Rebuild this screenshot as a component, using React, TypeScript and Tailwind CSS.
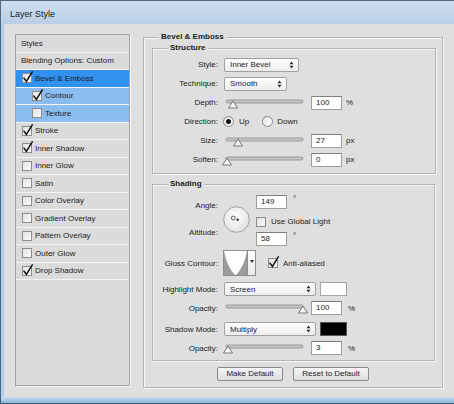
import type { ReactNode } from 'react';

const styleRows = [
  { label: 'Bevel & Emboss', checked: true, tone: 'active' },
  { label: 'Contour', checked: true, tone: 'sub', indent: true },
  { label: 'Texture', checked: false, tone: 'sub', indent: true },
  { label: 'Stroke', checked: true },
  { label: 'Inner Shadow', checked: true },
  { label: 'Inner Glow', checked: false },
  { label: 'Satin', checked: false },
  { label: 'Color Overlay', checked: false },
  { label: 'Gradient Overlay', checked: false },
  { label: 'Pattern Overlay', checked: false },
  { label: 'Outer Glow', checked: false },
  { label: 'Drop Shadow', checked: true },
];

function Check({ checked }: { checked: boolean }) {
  return (
    <span className="relative w-[10px] h-[10px] shrink-0 border border-[#8c8c8c] bg-linear-to-br from-[#e2e2e2] to-[#fbfbfb]">
      {checked && (
        <svg className="absolute -left-px -top-px overflow-visible" width="10" height="10" viewBox="0 0 10 10">
          <path d="M1.6 4.6 L4.4 8.4 L10.6 -1.6" fill="none" stroke="#111" strokeWidth="1.5" />
        </svg>
      )}
    </span>
  );
}

function Radio({ on }: { on?: boolean }) {
  return (
    <span className="w-[11px] h-[11px] shrink-0 rounded-full border border-[#868686] bg-linear-to-br from-[#e4e4e4] to-white flex items-center justify-center">
      {on && <span className="w-[5px] h-[5px] rounded-full bg-[#111]" />}
    </span>
  );
}

function Arrows() {
  return (
    <svg width="5" height="8" viewBox="0 0 5 8">
      <path d="M2.5 0.5 L4.6 3.2 H0.4 Z M2.5 7.5 L4.6 4.8 H0.4 Z" fill="#333" />
    </svg>
  );
}

function Select({ value, className }: { value: string; className: string }) {
  return (
    <div className={`${className} h-[14px] shrink-0 rounded-[2px] border border-[#a0a0a0] bg-linear-to-b from-white to-[#ececec] flex items-center justify-between pl-[5px] pr-[4px]`}>
      <span>{value}</span>
      <Arrows />
    </div>
  );
}

function Num({ value }: { value: string }) {
  return (
    <div className="w-[31px] h-[14px] shrink-0 border border-[#9e9e9e] border-t-[#7e7e7e] bg-white pl-[4px] leading-[12px]">
      {value}
    </div>
  );
}

// pos: centre of the thumb, px from the left of the svg
function Slider({ pos }: { pos: number }) {
  return (
    <svg width="84" height="14" viewBox="0 0 84 14" className="shrink-0 overflow-visible">
      <rect x="2" y="4" width="77" height="3" rx="1.5" fill="#c6c6c6" stroke="#8a8a8a" strokeWidth="0.8" />
      <path
        d={`M${pos} 5 L${pos + 4.5} 12 L${pos - 4.5} 12 Z`}
        fill="#f3f3f3"
        stroke="#6c6c6c"
        strokeWidth="0.9"
        strokeLinejoin="round"
      />
    </svg>
  );
}

function Row({ label, children, className = 'h-[19px]' }: { label: string; children: ReactNode; className?: string }) {
  return (
    <div className={`${className} flex items-center`}>
      <span className="w-[65px] text-right">{label}</span>
      <div className="ml-[6px] flex items-center">{children}</div>
    </div>
  );
}

function Legend({ children }: { children: ReactNode }) {
  return (
    <span className="absolute left-[14px] -top-[7px] px-[3px] bg-[#dfdfdf] font-bold leading-[11px]">
      {children}
    </span>
  );
}

export default function App() {
  return (
    <div className="w-[454px] h-[404px] overflow-hidden flex flex-col bg-[#dfdfdf] text-[#1c1c1c] text-[8px] leading-[11px] font-['Liberation_Sans',Arial,sans-serif]">
      <div className="h-[24px] shrink-0 border-t border-l border-[#56697c] bg-linear-to-b from-[#cfdef0] to-[#b9cfe7] pl-[9px] pt-[7px] text-[9px] leading-[12px] text-[#1a1a1a]">
        Layer Style
      </div>

      <div className="flex-1 flex border-l border-[#4a6a88]">
        <div className="flex-1 flex border-l-[3px] border-[#b3cfea]">
          {/* styles list */}
          <div className="ml-[11px] mt-[10px] w-[115px] h-[352px] border border-[#a2a2a2] bg-[#dbdbdb] shadow-[1px_1px_0_#f7f7f7]">
            <div className="h-[17.5px] border-b border-[#f4f4f4] flex items-center pl-[5px]">Styles</div>
            <div className="h-[17.5px] border-b border-[#f4f4f4] flex items-center pl-[5px]">Blending Options: Custom</div>
            {styleRows.map((r) => (
              <div
                key={r.label}
                className={`h-[17.5px] border-b border-[#f4f4f4] flex items-center gap-[3px] ${r.indent ? 'pl-[16px]' : 'pl-[6px]'} ${
                  r.tone === 'active' ? 'bg-[#3191f0]' : r.tone === 'sub' ? 'bg-[#8cbdf0]' : ''
                }`}
              >
                <Check checked={r.checked} />
                <span>{r.label}</span>
              </div>
            ))}
          </div>

          {/* bevel & emboss panel */}
          <div className="relative ml-[13px] mt-[13px] w-[300px] h-[351px] border border-[#b3b3b3] shadow-[inset_1px_1px_0_#f7f7f7,1px_1px_0_#f7f7f7]">
            <Legend>Bevel &amp; Emboss</Legend>
            <div className="pl-[8px] pt-[10px]">
              <div className="relative w-[284px] h-[126px] border border-[#b3b3b3] shadow-[inset_1px_1px_0_#f7f7f7,1px_1px_0_#f7f7f7] pt-[6px]">
                <Legend>Structure</Legend>
                <Row label="Style:">
                  <Select value="Inner Bevel" className="w-[75px]" />
                </Row>
                <Row label="Technique:">
                  <Select value="Smooth" className="w-[63px]" />
                </Row>
                <Row label="Depth:">
                  <Slider pos={9} />
                  <div className="ml-[3px]"><Num value="100" /></div>
                  <span className="ml-[4px]">%</span>
                </Row>
                <Row label="Direction:">
                  <div className="-ml-px"><Radio on /></div>
                  <span className="ml-[5px]">Up</span>
                  <div className="ml-[13px]"><Radio /></div>
                  <span className="ml-[4px]">Down</span>
                </Row>
                <Row label="Size:">
                  <Slider pos={14} />
                  <div className="ml-[3px]"><Num value="27" /></div>
                  <span className="ml-[4px]">px</span>
                </Row>
                <Row label="Soften:">
                  <Slider pos={3} />
                  <div className="ml-[3px]"><Num value="0" /></div>
                  <span className="ml-[4px]">px</span>
                </Row>
              </div>

              <div className="relative mt-[10px] w-[283px] h-[177px] border border-[#b3b3b3] shadow-[inset_1px_1px_0_#f7f7f7,1px_1px_0_#f7f7f7] pt-[10px]">
                <Legend>Shading</Legend>

                <div className="h-[51px] flex">
                  <div className="w-[65px] flex flex-col items-end">
                    <span className="mt-[5px]">Angle:</span>
                    <span className="mt-[16px]">Altitude:</span>
                  </div>
                  <svg className="ml-[5px] mt-[11px] shrink-0" width="27" height="27" viewBox="0 0 27 27">
                    <defs>
                      <radialGradient id="dial" cx="45%" cy="40%" r="60%">
                        <stop offset="0" stopColor="#ffffff" />
                        <stop offset="1" stopColor="#e2e2e2" />
                      </radialGradient>
                    </defs>
                    <circle cx="13.5" cy="13.5" r="12.8" fill="url(#dial)" stroke="#9a9a9a" strokeWidth="0.9" />
                    <circle cx="10.3" cy="12" r="1.9" fill="none" stroke="#333" strokeWidth="0.8" />
                    <circle cx="14.6" cy="13.8" r="1.2" fill="#333" />
                  </svg>
                  <div className="ml-[6px] flex flex-col">
                    <div className="flex items-start">
                      <Num value="149" />
                      <span className="ml-[6px] -mt-[2px]">°</span>
                    </div>
                    <div className="mt-[7px] flex items-center gap-[5px]">
                      <Check checked={false} />
                      <span>Use Global Light</span>
                    </div>
                    <div className="mt-[5px] flex items-start">
                      <Num value="58" />
                      <span className="ml-[6px] -mt-[2px]">°</span>
                    </div>
                  </div>
                </div>

                <Row label="Gloss Contour:" className="mt-[4px] h-[26px]">
                  <div className="-ml-px flex">
                    <div className="w-[25px] h-[26px] border border-[#8e8e8e] bg-white">
                      <svg width="23" height="24" viewBox="0 0 23 24">
                        <path d="M0 0 Q3 16 11 24 L0 24 Z M23 0 Q20 16 12 24 L23 24 Z" fill="#9c9c9c" />
                      </svg>
                    </div>
                    <div className="w-[8px] h-[26px] border border-l-0 border-[#8e8e8e] bg-linear-to-b from-white to-[#e8e8e8] flex justify-center pt-[9px]">
                      <svg width="4" height="3" viewBox="0 0 4 3">
                        <path d="M0 0 H4 L2 3 Z" fill="#333" />
                      </svg>
                    </div>
                  </div>
                  <div className="ml-[12px] flex items-center gap-[5px]">
                    <Check checked />
                    <span>Anti-aliased</span>
                  </div>
                </Row>

                <Row label="Highlight Mode:" className="mt-[6px] h-[14px]">
                  <Select value="Screen" className="w-[92px]" />
                  <div className="ml-[4px] w-[27px] h-[14px] border border-[#a4a4a4] bg-white" />
                </Row>
                <Row label="Opacity:" className="mt-[5px] h-[14px]">
                  <Slider pos={79} />
                  <div className="ml-[3px]"><Num value="100" /></div>
                  <span className="ml-[6px]">%</span>
                </Row>
                <Row label="Shadow Mode:" className="mt-[7px] h-[14px]">
                  <Select value="Multiply" className="w-[92px]" />
                  <div className="ml-[4px] w-[27px] h-[14px] border border-[#555] bg-black" />
                </Row>
                <Row label="Opacity:" className="mt-[5px] h-[14px]">
                  <Slider pos={4} />
                  <div className="ml-[3px]"><Num value="3" /></div>
                  <span className="ml-[6px]">%</span>
                </Row>
              </div>

              <div className="mt-[6px] ml-[65px] flex gap-[10px]">
                <button className="w-[66px] h-[14px] rounded-[2px] border border-[#8a8a8a] bg-linear-to-b from-[#f6f6f6] to-[#dcdcdc] leading-[12px]">
                  Make Default
                </button>
                <button className="w-[76px] h-[14px] rounded-[2px] border border-[#8a8a8a] bg-linear-to-b from-[#f6f6f6] to-[#dcdcdc] leading-[12px]">
                  Reset to Default
                </button>
              </div>
            </div>
          </div>
        </div>
      </div>

      <div className="h-[7px] shrink-0 border-l border-b border-[#3b5b79] bg-linear-to-b from-[#c6ddf2] to-[#8db5d8]" />
    </div>
  );
}
